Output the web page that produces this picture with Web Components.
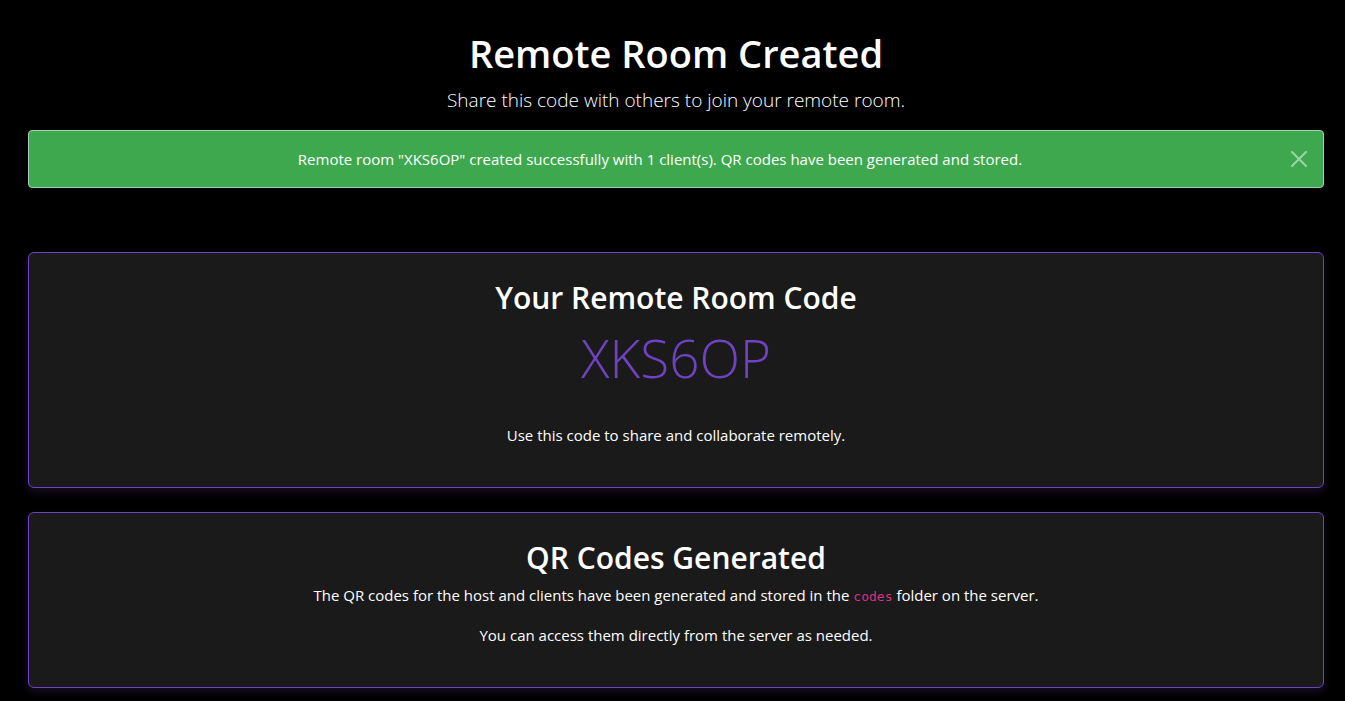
<!DOCTYPE html>
<html lang="en">
<head>
<meta charset="utf-8">
<meta name="viewport" content="width=device-width, initial-scale=1">
<title>Remote Room Created</title>
<style>
body { margin: 0; background: #000; color: #fff; font: 400 15px/24px "Segoe UI", "Open Sans", "Noto Sans", sans-serif; }
</style>
</head>
<body>
<room-page>
  <page-heading>
    <span slot="title">Remote Room Created</span>
    Share this code with others to join your remote room.
  </page-heading>
  <status-alert>Remote room "XKS6OP" created successfully with 1 client(s). QR codes have been generated and stored.</status-alert>
  <info-card slot="cards">
    <span slot="title">Your Remote Room Code</span>
    <room-code>XKS6OP</room-code>
    <card-text>Use this code to share and collaborate remotely.</card-text>
  </info-card>
  <info-card slot="cards">
    <span slot="title">QR Codes Generated</span>
    <card-text>The QR codes for the host and clients have been generated and stored in the <inline-code>codes</inline-code> folder on the server.</card-text>
    <card-text>You can access them directly from the server as needed.</card-text>
  </info-card>
</room-page>
<script>
const define = (name, markup, setup) => customElements.define(name, class extends HTMLElement {
  constructor() {
    super();
    this.attachShadow({ mode: "open" }).innerHTML = markup;
    if (setup) setup(this);
  }
});

define("room-page", `
  <style>
    :host { display: block; padding: 29px 21px 13px 28px; text-align: center; }
    .cards { display: flex; flex-direction: column; gap: 24px; margin-top: 64px; }
  </style>
  <main><slot></slot><div class="cards"><slot name="cards"></slot></div></main>`);

define("page-heading", `
  <style>
    :host { display: block; margin-bottom: 15px; }
    h1 { margin: 0 0 8px; font-size: 38px; line-height: 48px; font-weight: 600; }
    p { margin: 0; font-size: 19px; line-height: 30px; font-weight: 300; }
  </style>
  <header><h1><slot name="title"></slot></h1><p><slot></slot></p></header>`);

define("status-alert", `
  <style>
    :host { display: flex; align-items: center; gap: 16px; padding: 16px; border: 1px solid #a3cfbb; border-radius: 4px; background: #3ea84f; }
    :host([hidden]) { display: none; }
    p { flex: 1; margin: 0; }
    button { display: flex; margin: 0; padding: 0; border: 0; background: none; color: #fff; opacity: .5; cursor: pointer; }
    button svg { display: block; width: 16px; height: 16px; }
  </style>
  <p role="alert"><slot></slot></p>
  <button type="button" aria-label="Close"><svg viewBox="0 0 16 16" aria-hidden="true"><path d="M1 1 15 15M15 1 1 15" fill="none" stroke="currentColor" stroke-width="2" stroke-linecap="round"/></svg></button>`,
  host => host.shadowRoot.querySelector("button").addEventListener("click", () => { host.hidden = true; }));

define("info-card", `
  <style>
    :host { display: block; padding: 24px; border: 1px solid #6f42c1; border-radius: 6px; background: #1a1a1a; box-shadow: 0 4px 8px rgba(111, 66, 193, .2); }
    h2 { margin: 0 0 4px; font-size: 30px; line-height: 42px; font-weight: 600; }
  </style>
  <section><h2><slot name="title"></slot></h2><slot></slot></section>`);

define("room-code", `
  <style>
    :host { display: block; margin-bottom: 30px; color: #6f42c1; font-size: 53px; line-height: 70px; font-weight: 300; }
  </style>
  <slot></slot>`);

define("card-text", `
  <style>:host { display: block; margin-bottom: 16px; } p { margin: 0; }</style>
  <p><slot></slot></p>`);

define("inline-code", `
  <style>
    code { color: #d63384; font-family: Consolas, "DejaVu Sans Mono", monospace; font-size: 13px; line-height: 16px; }
  </style>
  <code><slot></slot></code>`);
</script>
</body>
</html>
